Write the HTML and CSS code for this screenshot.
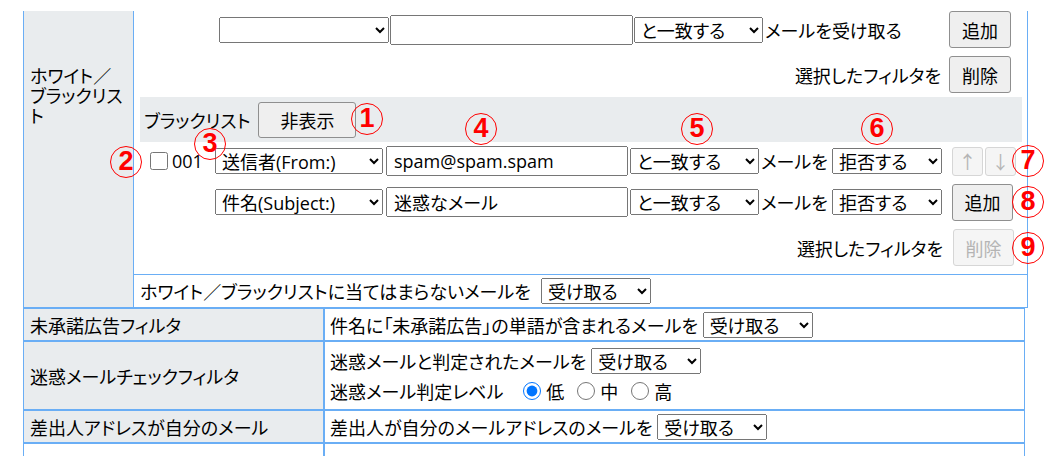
FILE: index.html
```html
<!DOCTYPE html>
<html lang="ja">
<head>
  <meta charset="UTF-8" />
  <title>メールフィルタ設定</title>
  <link rel="stylesheet" href="styles.css">
</head>
<body>
  <div class="page">
    <table class="wb">
      <tr>
        <th class="wb-label">ホワイト／<br>ブラックリス<br>ト</th>
        <td class="wb-body">
          <div class="top-add">
            <select class="sel-field"></select>
            <input class="txt" type="text">
            <select class="sel-match"><option>と一致する</option></select>
            <span class="accept-note">メールを受け取る</span>
            <button class="btn">追加</button>
          </div>
          <div class="top-del">
            <span>選択したフィルタを</span>
            <button class="btn">削除</button>
          </div>

          <div class="bl">
            <div class="bl-head">
              <span>ブラックリスト</span>
              <button class="btn btn-toggle">非表示</button>
            </div>
            <div class="bl-row r1">
              <span class="bl-id"><input type="checkbox" class="chk"><span>001</span></span>
              <select class="sel-field"><option>送信者(From:)</option></select>
              <input class="txt" type="text" value="spam@spam.spam">
              <select class="sel-match"><option>と一致する</option></select>
              <span class="mail-to">メールを</span>
              <select class="sel-action"><option>拒否する</option></select>
              <span class="order">
                <button class="arrow" disabled>↑</button>
                <button class="arrow" disabled>↓</button>
              </span>
            </div>
            <div class="bl-row r2">
              <span class="bl-id"></span>
              <select class="sel-field"><option>件名(Subject:)</option></select>
              <input class="txt" type="text" value="迷惑なメール">
              <select class="sel-match"><option>と一致する</option></select>
              <span class="mail-to">メールを</span>
              <select class="sel-action"><option>拒否する</option></select>
              <button class="btn btn-add">追加</button>
            </div>
            <div class="bl-row r3">
              <span>選択したフィルタを</span>
              <button class="btn btn-add" disabled>削除</button>
            </div>
          </div>

          <div class="wb-rest">
            <span>ホワイト／ブラックリストに当てはまらないメールを</span>
            <select class="sel-recv"><option>受け取る</option></select>
          </div>
        </td>
      </tr>
    </table>

    <table class="filters">
      <tr>
        <th>未承諾広告フィルタ</th>
        <td>件名に「未承諾広告」の単語が含まれるメールを <select class="sel-recv"><option>受け取る</option></select></td>
      </tr>
      <tr>
        <th>迷惑メールチェックフィルタ</th>
        <td class="multi">
          <div class="line">迷惑メールと判定されたメールを <select class="sel-recv"><option>受け取る</option></select></div>
          <div class="line">
            迷惑メール判定レベル
            <label class="lv first"><input type="radio" name="lv" checked>低</label>
            <label class="lv"><input type="radio" name="lv">中</label>
            <label class="lv"><input type="radio" name="lv">高</label>
          </div>
        </td>
      </tr>
      <tr>
        <th>差出人アドレスが自分のメール</th>
        <td>差出人が自分のメールアドレスのメールを <select class="sel-recv"><option>受け取る</option></select></td>
      </tr>
      <tr class="cut">
        <th></th>
        <td></td>
      </tr>
    </table>

    <span class="mark m1">1</span>
    <span class="mark m2">2</span>
    <span class="mark m3">3</span>
    <span class="mark m4">4</span>
    <span class="mark m5">5</span>
    <span class="mark m6">6</span>
    <span class="mark m7">7</span>
    <span class="mark m8">8</span>
    <span class="mark m9">9</span>
  </div>
</body>
</html>
```

FILE: styles.css
```css
:root {
  --line: #6aaef5;
  --head: #e9ecee;
  --mark: #ff0000;
}
* {
  box-sizing: border-box;
}
body {
  margin: 0;
  background: #fff;
  color: #000;
  font-family: "Open Sans", "Noto Sans CJK JP", sans-serif;
  font-size: 18px;
  font-feature-settings: "palt";
}
.page {
  position: relative;
  padding: 11px 0 0 23px;
}
select, input, button {
  font: inherit;
  font-feature-settings: "palt";
  margin: 0;
  color: #000;
}
select {
  height: 26px;
  padding: 0 2px;
}
.txt {
  height: 30px;
  padding: 0 6px;
}
button {
  background: #efefef;
  border: 1px solid #8f8f8f;
  border-radius: 3px;
  white-space: nowrap;
}
button:disabled {
  background: #f5f5f5;
  border-color: #d6d6d6;
  color: #b4b4b4;
}
.btn {
  height: 37px;
  padding: 0 12px;
}

/* white / black list */
.wb {
  width: 1005px;
  border-collapse: collapse;
}
.wb th, .wb td {
  border: 1px solid var(--line);
  border-top: none;
  padding: 0;
}
.wb-label {
  width: 110px;
  background: var(--head);
  font-weight: normal;
  text-align: left;
  vertical-align: top;
  white-space: nowrap;
  line-height: 20px;
  padding: 55px 0 0 6px !important;
}
.top-add, .top-del {
  display: flex;
  align-items: center;
  justify-content: flex-end;
  height: 37px;
  padding-right: 16px;
}
.top-add {
  margin-bottom: 8px;
}
.top-del {
  margin-bottom: 4px;
}
.top-add .sel-field {
  width: 170px;
}
.top-add .txt {
  width: 243px;
  margin-left: 1px;
}
.top-add .sel-match {
  margin-left: 1px;
}
.accept-note {
  width: 186px;
  padding-left: 2px;
}
.top-del .btn {
  margin-left: 8px;
}
.sel-match {
  width: 129px;
}

.bl {
  margin: 0 5px 0 6px;
  padding-bottom: 8px;
}
.bl-head {
  display: flex;
  align-items: center;
  height: 45px;
  padding-left: 4px;
  background: var(--head);
}
.btn-toggle {
  width: 98px;
  height: 36px;
  margin-left: 8px;
}
.bl-row {
  display: flex;
  align-items: center;
}
.bl-row.r1 {
  height: 30px;
  margin-top: 4px;
}
.bl-row.r2 {
  height: 36px;
  margin-top: 8px;
}
.bl-row.r3 {
  height: 37px;
  margin-top: 9px;
  justify-content: flex-end;
}
.bl-id {
  display: flex;
  align-items: center;
  width: 75px;
  padding-left: 10px;
}
.chk {
  width: 18px;
  height: 18px;
  margin: 0 4px 0 0;
}
.bl-row .sel-field {
  width: 168px;
}
.bl-row .txt {
  width: 242px;
  margin-left: 3px;
}
.bl-row .sel-match {
  margin-left: 2px;
}
.mail-to {
  width: 73px;
  padding-left: 2px;
}
.sel-action {
  width: 110px;
}
.order {
  display: flex;
  margin-left: 10px;
}
.arrow {
  width: 31px;
  height: 29px;
  padding: 0;
  margin-right: 2px;
}
.btn-add {
  width: 61px;
  padding: 0;
  margin-left: 10px;
}
.bl-row.r3 .btn-add {
  margin-right: 8px;
}
.wb-rest {
  display: flex;
  align-items: center;
  gap: 10px;
  height: 33px;
  padding-left: 6px;
  border-top: 1px solid var(--line);
}
.sel-recv {
  width: 110px;
}

/* other filters */
.filters {
  width: 1002px;
  border-collapse: separate;
  border-spacing: 0;
}
.filters th, .filters td {
  border: 1px solid var(--line);
  height: 33px;
  padding: 0 5px;
}
.filters th {
  width: 301px;
  background: var(--head);
  font-weight: normal;
  text-align: left;
  padding-left: 6px;
}
.filters td.multi {
  padding-top: 4px;
  padding-bottom: 4px;
}
.multi .line {
  display: flex;
  align-items: center;
  gap: 5px;
  height: 30px;
}
.multi .line + .line {
  height: 29px;
}
.lv {
  display: flex;
  align-items: center;
  gap: 5px;
  margin-left: 8px;
}
.lv.first {
  margin-left: 15px;
}
.lv input {
  width: 18px;
  height: 18px;
  margin: 0;
}
.filters .cut th {
  background: #fff;
}

/* numbered callouts */
.mark {
  position: absolute;
  width: 32px;
  height: 32px;
  border: 1.5px solid var(--mark);
  border-radius: 50%;
  color: var(--mark);
  font: bold 27px/29px "Liberation Sans", sans-serif;
  text-align: center;
}
.m1 { left: 351px; top: 103px; }
.m2 { left: 110px; top: 146px; }
.m3 { left: 194px; top: 128px; }
.m4 { left: 465px; top: 113px; }
.m5 { left: 681px; top: 113px; }
.m6 { left: 861px; top: 113px; }
.m7 { left: 1012px; top: 145px; }
.m8 { left: 1012px; top: 186px; }
.m9 { left: 1012px; top: 232px; }
```
